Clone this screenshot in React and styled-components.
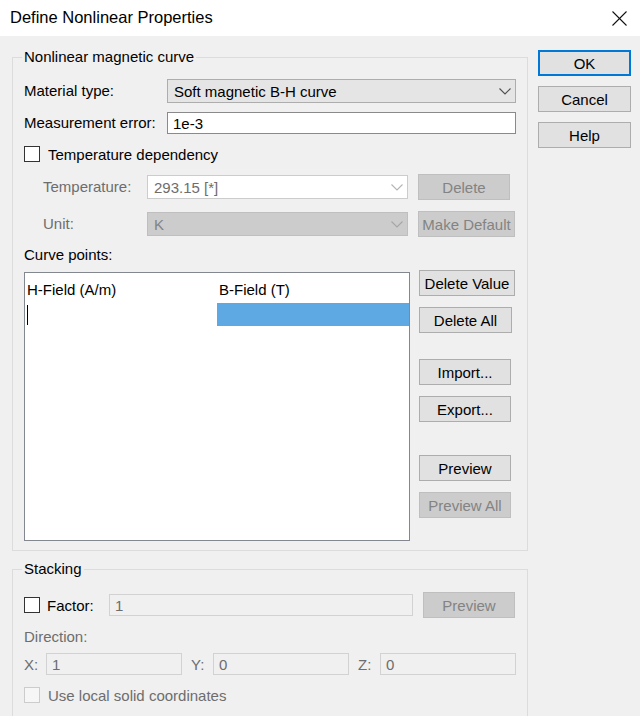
import React from "react";
import styled, { createGlobalStyle, css } from "styled-components";

const GlobalStyle = createGlobalStyle`
  html, body {
    margin: 0;
    padding: 0;
    background: #f0f0f0;
  }
  body {
    font-family: "Liberation Sans", Arial, sans-serif;
    font-size: 15px;
    color: #000;
  }
`;

const MUTED = "#6d6d6d";

const Window = styled.div`
  width: 640px;
  height: 716px;
  overflow: hidden;
  background: #f0f0f0;
  display: flex;
  flex-direction: column;
`;

const TitleBar = styled.div`
  flex: none;
  height: 36px;
  background: #fff;
  display: flex;
  align-items: center;
  justify-content: space-between;
  padding: 0 13px 0 10px;
`;

const Title = styled.div`
  font-size: 16.5px;
  margin-top: -2px;
`;

const Body = styled.div`
  display: flex;
  gap: 10px;
  padding: 12px 0 0 12px;
`;

const Main = styled.div`
  flex: none;
  width: 516px;
  display: flex;
  flex-direction: column;
  gap: 9px;
`;

const Side = styled.div`
  display: flex;
  flex-direction: column;
  gap: 10px;
  padding-top: 2px;
`;

const Group = styled.fieldset`
  margin: 0;
  min-width: 0;
  border: 1px solid #dcdcdc;
  padding: 0 11px ${(p) => p.$bottom}px;
`;

const Legend = styled.legend`
  padding: 0 2px;
  margin-left: -2px;
  line-height: 18px;
`;

const FieldRow = styled.div`
  display: grid;
  grid-template-columns: 143px 1fr;
  align-items: center;
  height: ${(p) => p.$h}px;
  margin-top: ${(p) => p.$top}px;
`;

const SubRow = styled.div`
  display: grid;
  grid-template-columns: 94px 261px auto;
  column-gap: 10px;
  align-items: center;
  height: 26px;
  padding-left: 19px;
  margin-top: ${(p) => p.$top}px;
`;

const CheckRow = styled.label`
  display: flex;
  align-items: center;
  gap: 8px;
  height: 20px;
  margin-top: ${(p) => p.$top}px;
  color: ${(p) => (p.$disabled ? MUTED : "#000")};
`;

const Label = styled.span`
  color: ${(p) => (p.$muted ? MUTED : "#000")};
  white-space: nowrap;
  line-height: 18px;
`;

const Caption = styled.div`
  line-height: 18px;
  margin-top: ${(p) => p.$top}px;
  color: ${(p) => (p.$muted ? MUTED : "#000")};
`;

const Box = styled.span`
  flex: none;
  width: 16px;
  height: 16px;
  box-sizing: border-box;
  border: 1px solid ${(p) => (p.$disabled ? "#cccccc" : "#333")};
  background: ${(p) => (p.$disabled ? "#f6f6f6" : "#fff")};
`;

const Field = styled.div`
  height: 22px;
  box-sizing: border-box;
  display: flex;
  align-items: center;
  padding: 0 5px;
  white-space: nowrap;
  ${(p) =>
    p.$disabled
      ? css`
          border: 1px solid #d2d2d2;
          background: #f0f0f0;
          color: ${MUTED};
        `
      : css`
          border: 1px solid #8a8a8a;
          background: #fff;
          color: #000;
        `}
`;

const comboTones = {
  normal: css`
    background: #e5e5e5;
    border: 1px solid #adadad;
    color: #000;
    --chevron: #505050;
  `,
  editable: css`
    background: #fff;
    border: 1px solid #cccccc;
    color: ${MUTED};
    --chevron: #b4b4b4;
  `,
  disabled: css`
    background: #cccccc;
    border: 1px solid #bfbfbf;
    color: #838383;
    --chevron: #a6a6a6;
  `,
};

const Combo = styled.div`
  height: 24px;
  box-sizing: border-box;
  display: flex;
  align-items: center;
  justify-content: space-between;
  padding: 0 4px 0 6px;
  ${(p) => comboTones[p.$tone || "normal"]}

  svg {
    stroke: var(--chevron);
  }
`;

const Button = styled.button`
  width: ${(p) => p.$w || 92}px;
  height: 26px;
  box-sizing: border-box;
  padding: 0;
  margin-top: ${(p) => p.$top || 0}px;
  font: inherit;
  font-size: 15px;
  color: #000;
  background: #e1e1e1;
  border: 1px solid #adadad;
  border-radius: 0;

  ${(p) =>
    p.$primary &&
    css`
      border-color: #0078d7;
      box-shadow: inset 0 0 0 1px #0078d7;
    `}

  ${(p) =>
    p.disabled &&
    css`
      background: #cccccc;
      border-color: #bfbfbf;
      color: #838383;
    `}
`;

const CurveArea = styled.div`
  display: grid;
  grid-template-columns: 386px 1fr;
  column-gap: 9px;
  margin-top: 6px;
`;

const Table = styled.div`
  margin-top: 2px;
  height: 269px;
  box-sizing: border-box;
  border: 1px solid #828790;
  background: #fff;
`;

const TableRow = styled.div`
  display: grid;
  grid-template-columns: 192px 1fr;
  height: ${(p) => p.$h}px;
`;

const HeadCell = styled.div`
  display: flex;
  align-items: center;
  padding: 3px 0 0 2px;
`;

const Cell = styled.div`
  display: flex;
  align-items: center;
  padding-left: 2px;
  background: ${(p) => (p.$selected ? "#5ea8e4" : "#fff")};
`;

const Caret = styled.span`
  width: 1px;
  height: 20px;
  background: #000;
`;

const ButtonColumn = styled.div`
  display: flex;
  flex-direction: column;
  align-items: flex-start;
`;

const FactorRow = styled.div`
  display: grid;
  grid-template-columns: 85px 304px 92px;
  align-items: center;
  height: 26px;
  margin-top: 14px;

  & > button {
    margin-left: 10px;
  }
`;

const FactorCheck = styled.label`
  display: flex;
  align-items: center;
  gap: 7px;
`;

const CoordRow = styled.div`
  display: grid;
  grid-template-columns: repeat(3, 1fr);
  column-gap: 9px;
  margin-top: 7px;
`;

const Coord = styled.div`
  display: grid;
  grid-template-columns: 22px 1fr;
  align-items: center;
  color: ${MUTED};
`;

const Chevron = () => (
  <svg width="12" height="7" viewBox="0 0 12 7" fill="none" strokeWidth="1.1">
    <polyline points="0.5,0.5 6,6 11.5,0.5" />
  </svg>
);

const CloseIcon = () => (
  <svg width="15" height="15" viewBox="0 0 15 15" stroke="#111" strokeWidth="1.1">
    <line x1="0.5" y1="0.5" x2="14.5" y2="14.5" />
    <line x1="14.5" y1="0.5" x2="0.5" y2="14.5" />
  </svg>
);

const App = () => (
  <>
    <GlobalStyle />
    <Window>
      <TitleBar>
        <Title>Define Nonlinear Properties</Title>
        <CloseIcon />
      </TitleBar>

      <Body>
        <Main>
          <Group $bottom={9}>
            <Legend>Nonlinear magnetic curve</Legend>

            <FieldRow $h={24} $top={13}>
              <Label>Material type:</Label>
              <Combo>
                <span>Soft magnetic B-H curve</span>
                <Chevron />
              </Combo>
            </FieldRow>

            <FieldRow $h={22} $top={9}>
              <Label>Measurement error:</Label>
              <Field>1e-3</Field>
            </FieldRow>

            <CheckRow $top={10}>
              <Box />
              <span>Temperature dependency</span>
            </CheckRow>

            <SubRow $top={10}>
              <Label $muted>Temperature:</Label>
              <Combo $tone="editable">
                <span>293.15 [*]</span>
                <Chevron />
              </Combo>
              <Button disabled>Delete</Button>
            </SubRow>

            <SubRow $top={11}>
              <Label $muted>Unit:</Label>
              <Combo $tone="disabled">
                <span>K</span>
                <Chevron />
              </Combo>
              <Button disabled $w={97}>
                Make Default
              </Button>
            </SubRow>

            <Caption $top={9}>Curve points:</Caption>

            <CurveArea>
              <Table>
                <TableRow $h={30}>
                  <HeadCell>H-Field (A/m)</HeadCell>
                  <HeadCell>B-Field (T)</HeadCell>
                </TableRow>
                <TableRow $h={23}>
                  <Cell>
                    <Caret />
                  </Cell>
                  <Cell $selected />
                </TableRow>
              </Table>

              <ButtonColumn>
                <Button $w={96}>Delete Value</Button>
                <Button $w={93} $top={11}>
                  Delete All
                </Button>
                <Button $top={26}>Import...</Button>
                <Button $top={11}>Export...</Button>
                <Button $top={33}>Preview</Button>
                <Button disabled $top={11}>
                  Preview All
                </Button>
              </ButtonColumn>
            </CurveArea>
          </Group>

          <Group $bottom={30}>
            <Legend>Stacking</Legend>

            <FactorRow>
              <FactorCheck>
                <Box />
                <span>Factor:</span>
              </FactorCheck>
              <Field $disabled>1</Field>
              <Button disabled>Preview</Button>
            </FactorRow>

            <Caption $muted $top={10}>
              Direction:
            </Caption>

            <CoordRow>
              <Coord>
                <span>X:</span>
                <Field $disabled>1</Field>
              </Coord>
              <Coord>
                <span>Y:</span>
                <Field $disabled>0</Field>
              </Coord>
              <Coord>
                <span>Z:</span>
                <Field $disabled>0</Field>
              </Coord>
            </CoordRow>

            <CheckRow $top={10} $disabled>
              <Box $disabled />
              <span>Use local solid coordinates</span>
            </CheckRow>
          </Group>
        </Main>

        <Side>
          <Button $primary $w={93}>
            OK
          </Button>
          <Button $w={93}>Cancel</Button>
          <Button $w={93}>Help</Button>
        </Side>
      </Body>
    </Window>
  </>
);

export default App;
